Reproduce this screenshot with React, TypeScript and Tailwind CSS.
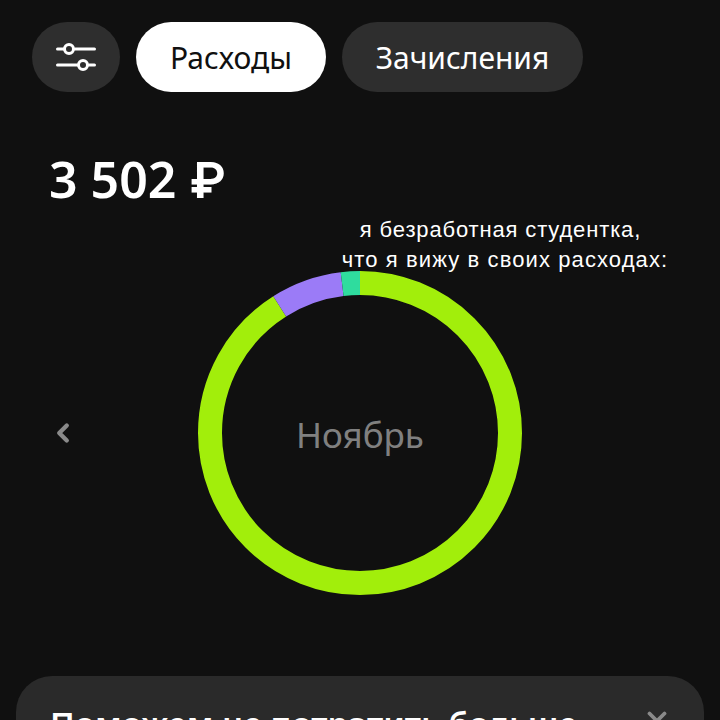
import { ChevronLeft, X } from "lucide-react";

const R = 150;
const CIRC = 2 * Math.PI * R;

// share of the ring, clockwise from 12 o'clock
const segments = [
  { color: "#a2ee0b", from: 0, to: 327.5 },
  { color: "#9b7bf7", from: 327.5, to: 353 },
  { color: "#2fdc9e", from: 353, to: 360 },
];

function FilterIcon() {
  return (
    <svg width="40" height="30" viewBox="0 0 40 30" fill="none" stroke="white" strokeWidth="3">
      <path d="M1.5 7h7M19 7h19.5M1.5 23h20M33 23h5.5" strokeLinecap="round" />
      <circle cx="13" cy="7" r="4.5" />
      <circle cx="27" cy="23" r="4.5" />
    </svg>
  );
}

function Ring() {
  return (
    <svg width="324" height="324" viewBox="0 0 324 324" className="-rotate-90">
      {segments.map((s) => (
        <circle
          key={s.color}
          cx="162"
          cy="162"
          r={R}
          fill="none"
          stroke={s.color}
          strokeWidth="24"
          strokeDasharray={`${((s.to - s.from) / 360) * CIRC} ${CIRC}`}
          strokeDashoffset={(-s.from / 360) * CIRC}
        />
      ))}
    </svg>
  );
}

export default function App() {
  return (
    <div className="h-[720px] w-[720px] overflow-hidden bg-[#101010] text-white font-['Noto_Sans',sans-serif]">
      <div className="flex gap-4 pl-8 pt-[22px]">
        <button className="flex h-[70px] w-[88px] items-center justify-center rounded-[35px] bg-[#2e2e2e]">
          <FilterIcon />
        </button>
        <button className="flex h-[70px] w-[190px] items-center justify-center rounded-[35px] bg-white text-[30px] text-[#101010]">
          Расходы
        </button>
        <button className="flex h-[70px] w-[241px] items-center justify-center rounded-[35px] bg-[#2e2e2e] text-[30px]">
          Зачисления
        </button>
      </div>

      <div className="mt-[52px] h-[70px] pl-[49px] text-[50px] font-semibold leading-[70px]">
        3 502 <span className="font-['Inter',sans-serif]">₽</span>
      </div>

      <div className="relative mt-[57px] flex h-[324px] items-center justify-center">
        <ChevronLeft className="absolute left-[48px] top-[147px] text-[#8a8a8a]" size={30} strokeWidth={3.5} />
        <Ring />
        <span className="absolute mt-1 text-[35px] text-[#808080]">Ноябрь</span>
        <div className="absolute left-[281px] right-0 top-[-56px] text-center font-['Liberation_Sans',sans-serif] text-[22px] leading-[30px] tracking-[1.1px] text-white">
          <div className="tracking-[0.85px]">я безработная студентка,</div>
          <div className="pl-[9px]">что я вижу в своих расходах:</div>
        </div>
      </div>

      <div className="mx-4 mt-[81px] flex h-[120px] items-start justify-between rounded-t-[36px] bg-[#2a2a2a] pl-[34px] pr-[32px] pt-[26px]">
        <span className="text-[33px] font-semibold leading-[44px]">Поможем не потратить больше</span>
        <X className="mt-[4px] text-[#8a8a8a]" size={30} strokeWidth={3} />
      </div>
    </div>
  );
}
